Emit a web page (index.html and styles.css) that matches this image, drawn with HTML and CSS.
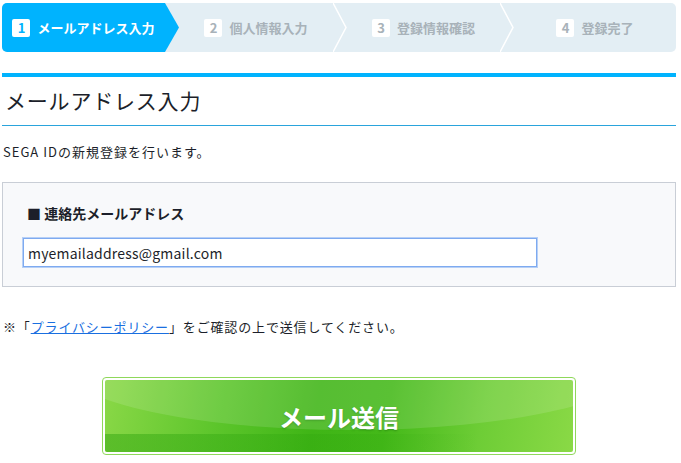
FILE: index.html
```html
<!DOCTYPE html>
<html lang="ja">
<head>
    <meta charset="UTF-8">
    <title>SEGA ID 新規登録</title>
    <link rel="stylesheet" href="styles.css">
</head>
<body>
    <div class="page">
        <!-- Step bar -->
        <ol class="steps">
            <li class="step current">
                <span class="step-num">1</span>
                <span class="step-label">メールアドレス入力</span>
                <svg class="step-arrow" viewBox="0 0 14 49" preserveAspectRatio="none">
                    <polygon points="0,0 14,24.5 0,49" fill="#00b3fe"/>
                </svg>
            </li>
            <li class="step">
                <span class="step-num">2</span>
                <span class="step-label">個人情報入力</span>
                <svg class="step-arrow" viewBox="0 0 14 49" preserveAspectRatio="none">
                    <polyline points="0,0 13,24.5 0,49" fill="none" stroke="#fff" stroke-width="1.5"/>
                </svg>
            </li>
            <li class="step">
                <span class="step-num">3</span>
                <span class="step-label">登録情報確認</span>
                <svg class="step-arrow" viewBox="0 0 14 49" preserveAspectRatio="none">
                    <polyline points="0,0 13,24.5 0,49" fill="none" stroke="#fff" stroke-width="1.5"/>
                </svg>
            </li>
            <li class="step">
                <span class="step-num">4</span>
                <span class="step-label">登録完了</span>
            </li>
        </ol>

        <!-- Title -->
        <h1 class="page-title">メールアドレス入力</h1>
        <p class="lead">SEGA IDの新規登録を行います。</p>

        <!-- Form -->
        <div class="form-box">
            <div class="form-label">■ 連絡先メールアドレス</div>
            <input class="form-input" type="text" value="myemailaddress@gmail.com">
        </div>

        <p class="note">※「<a href="#">プライバシーポリシー</a>」をご確認の上で送信してください。</p>

        <div class="submit-row">
            <button class="submit-btn" type="button"><span>メール送信</span></button>
        </div>
    </div>
</body>
</html>
```

FILE: styles.css
```css
* {
    margin: 0;
    padding: 0;
    box-sizing: border-box;
}

body {
    font-family: "Noto Sans CJK JP", "Noto Sans", sans-serif;
    background: #fff;
    color: #1c1f2a;
    font-size: 13px;
}

.page {
    width: 674px;
    margin-left: 2px;
    padding-top: 3px;
}

/* Step bar */
.steps {
    list-style: none;
    display: grid;
    grid-template-columns: 163px 168px 167px 1fr;
    height: 49px;
    background: #e3eef4;
    border-radius: 5px;
    overflow: hidden;
}

.step {
    position: relative;
    display: flex;
    align-items: center;
    justify-content: center;
    gap: 7px;
    padding-left: 14px;
    font-weight: bold;
    font-size: 13px;
    color: #a8b2b9;
}

.step.current {
    background: #00b3fe;
    color: #fff;
    padding-left: 0;
}

.step-num {
    display: flex;
    align-items: center;
    justify-content: center;
    width: 18px;
    height: 18px;
    background: #fff;
    border-radius: 2px;
    font-size: 13px;
    line-height: 1;
    color: #a8b2b9;
}

.step.current .step-num {
    color: #00b3fe;
}

.step-arrow {
    position: absolute;
    top: 0;
    right: -14px;
    width: 14px;
    height: 49px;
    z-index: 2;
}

/* Title */
.page-title {
    margin-top: 21px;
    border-top: 4px solid #00b3fe;
    border-bottom: 1px solid #2aa4dc;
    padding: 8px 0 10px 3px;
    font-size: 21px;
    font-weight: normal;
    line-height: 30px;
    letter-spacing: 0.8px;
    color: #1c1f2a;
}

.lead {
    margin-top: 16px;
    padding-left: 1px;
    line-height: 20px;
    letter-spacing: 1px;
}

/* Form */
.form-box {
    margin-top: 20px;
    background: #f8f9fb;
    border: 1px solid #c9ced6;
    padding: 20px 19px 19px 20px;
}

.form-label {
    font-size: 14px;
    font-weight: bold;
    line-height: 20px;
    padding-left: 4px;
}

.form-input {
    display: block;
    margin-top: 15px;
    width: 514px;
    height: 29px;
    border: 1px solid #7eaaf0;
    box-shadow: 0 0 0 1px #b7d0f6;
    background: #fff;
    padding: 0 4px;
    font-family: "Noto Sans CJK JP", "Noto Sans", sans-serif;
    font-size: 14px;
    letter-spacing: 0.2px;
    color: #1c1f2a;
    outline: none;
}

.note {
    margin-top: 30px;
    padding-left: 1px;
    line-height: 20px;
    letter-spacing: 0.85px;
}

.note a {
    color: #1a6fe0;
    text-decoration: underline;
}

/* Submit button */
.submit-row {
    display: flex;
    justify-content: center;
    margin-top: 40px;
}

.submit-btn {
    width: 474px;
    height: 78px;
    padding: 2px;
    background: #fff;
    border: 1px solid #8fd85a;
    border-radius: 4px;
    cursor: pointer;
}

.submit-btn span {
    position: relative;
    display: flex;
    align-items: center;
    justify-content: center;
    height: 100%;
    border-radius: 2px;
    overflow: hidden;
    background: linear-gradient(100deg, #8ad847 0%, #5cc52b 25%, #3fb516 45%, #44b919 60%, #6ecd36 80%, #8ad946 100%);
    color: #fff;
    font-family: "Noto Sans CJK JP", sans-serif;
    font-size: 24px;
    font-weight: bold;
    text-shadow: 0 1px 2px rgba(0, 70, 0, 0.35);
}

.submit-btn span::before {
    content: "";
    position: absolute;
    left: -10%;
    top: -120%;
    width: 125%;
    height: 190%;
    border-radius: 50%;
    background: rgba(255, 255, 255, 0.12);
}

.submit-btn span::after {
    content: "";
    position: absolute;
    left: 0;
    right: 0;
    bottom: 0;
    height: 18px;
    background: linear-gradient(90deg, rgba(40, 160, 10, 0.45), rgba(40, 160, 10, 0.2) 50%, rgba(140, 220, 70, 0) 80%);
}
```
